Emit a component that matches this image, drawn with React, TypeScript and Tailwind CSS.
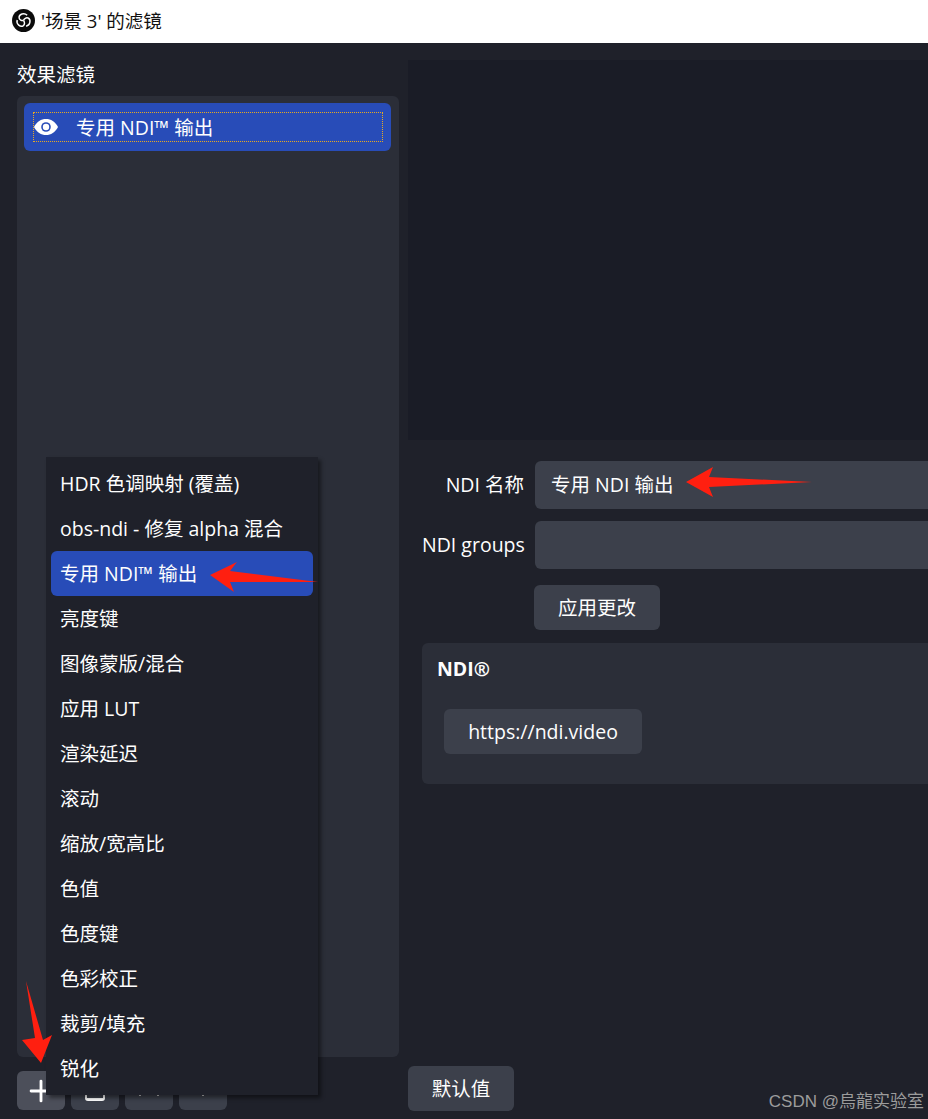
import { Plus } from "lucide-react";

const font = "font-['Open_Sans','Noto_Sans_CJK_SC',sans-serif]";

const filters = [
  "HDR 色调映射 (覆盖)",
  "obs-ndi - 修复 alpha 混合",
  "专用 NDI™ 输出",
  "亮度键",
  "图像蒙版/混合",
  "应用 LUT",
  "渲染延迟",
  "滚动",
  "缩放/宽高比",
  "色值",
  "色度键",
  "色彩校正",
  "裁剪/填充",
  "锐化",
];

function ObsLogo() {
  const blade = "M15.8 6.6C12.8 3.4 7 5.4 7.4 9.2C7.7 11.2 10 12.4 12 12";
  return (
    <svg width="23" height="23" viewBox="0 0 24 24">
      <circle cx="12" cy="12" r="12" fill="#0b0b0b" />
      <path d={blade} fill="none" stroke="#fff" strokeWidth="1.5" />
      <path d={blade} fill="none" stroke="#fff" strokeWidth="1.5" transform="rotate(120 12 12)" />
      <path d={blade} fill="none" stroke="#fff" strokeWidth="1.5" transform="rotate(240 12 12)" />
    </svg>
  );
}

function Eye() {
  return (
    <svg width="24" height="16" viewBox="0 0 24 16">
      <path d="M0 8C3 2.5 7 0 12 0S21 2.5 24 8C21 13.5 17 16 12 16S3 13.5 0 8Z" fill="#fff" />
      <circle cx="12" cy="8" r="4.8" fill="#284cb8" />
      <circle cx="12" cy="8" r="3.2" fill="#fff" />
    </svg>
  );
}

function ToolButton({ light, children }: { light?: boolean; children?: React.ReactNode }) {
  return (
    <button className={`w-[48px] h-[39px] rounded-md flex items-center justify-center text-white ${light ? "bg-[#4c4f5a]" : "bg-[#3c404b]"}`}>
      {children}
    </button>
  );
}

function Tick() {
  return <span className="block w-[2px] h-[1px] bg-[#c8c8c8]" />;
}

function Arrow({ className, w, h, points }: { className: string; w: number; h: number; points: string }) {
  return (
    <svg className={className} width={w} height={h} viewBox={`0 0 ${w} ${h}`}>
      <polygon points={points} fill="#ff1f10" />
    </svg>
  );
}

export default function App() {
  return (
    <div className={`relative w-[928px] h-[1119px] overflow-hidden flex flex-col bg-[#1f212a] text-[19.5px] text-[#fefefe] ${font}`}>
      <div className="h-[43px] shrink-0 bg-white flex items-center pl-[12px] pb-[2px] gap-[6px] text-[#111] text-[18.5px]">
        <ObsLogo />
        <span>'场景 3' 的滤镜</span>
      </div>

      <div className="flex-1 flex min-h-0">
        <div className="w-[408px] shrink-0 pl-[17px] pr-[9px] pt-[17px] pb-[9px] flex flex-col">
          <div className="h-[36px] pb-[6px] flex items-center">效果滤镜</div>
          <div className="flex-1 rounded-md bg-[#2b2e38] pl-[7px] pr-[8px] pt-[7px]">
            <div className="h-[48px] rounded-md bg-[#284cb8] pl-[9px] pr-[8px] py-[9px]">
              <div className="h-[30px] flex items-center border border-dotted border-[#e8a820]">
                <Eye />
                <span className="ml-[18px] pt-[1px]">专用 NDI™ 输出</span>
              </div>
            </div>
          </div>
          <div className="mt-[14px] flex gap-[6px]">
            <ToolButton light>
              <Plus size={34} strokeWidth={2} />
            </ToolButton>
            <ToolButton>
              <span className="flex justify-center gap-[3px] w-[20px] h-[18px] pt-[10px] border-x-[2px] border-b-[3px] border-white rounded-[3px] mt-[3px]">
                <Tick />
                <Tick />
                <Tick />
              </span>
            </ToolButton>
            <ToolButton>
              <span className="flex gap-[16px] mt-[9px]">
                <Tick />
                <Tick />
              </span>
            </ToolButton>
            <ToolButton>
              <span className="mt-[9px]">
                <Tick />
              </span>
            </ToolButton>
          </div>
        </div>

        <div className="flex-1 min-w-0 pt-[17px] pb-[8px] flex flex-col">
          <div className="h-[380px] shrink-0 bg-[#1a1c26]" />
          <div className="mt-[21px] ml-[14px] flex flex-col">
            <div className="flex items-center gap-[11px]">
              <div className="w-[102px] shrink-0 text-right whitespace-nowrap">NDI 名称</div>
              <div className="w-[500px] shrink-0 h-[48px] rounded-md bg-[#3c404b] pl-[16px] flex items-center">专用 NDI 输出</div>
            </div>
            <div className="mt-[12px] flex items-center gap-[11px]">
              <div className="w-[102px] shrink-0 text-right whitespace-nowrap">NDI groups</div>
              <div className="w-[500px] shrink-0 h-[48px] rounded-md bg-[#3c404b]" />
            </div>
            <button className="mt-[16px] ml-[112px] w-[126px] h-[45px] rounded-md bg-[#3c404b]">应用更改</button>
            <div className="mt-[13px] w-[600px] h-[141px] rounded-md bg-[#2b2e38] pl-[15px] pt-[13px]">
              <div className="font-bold leading-[26px]">NDI®</div>
              <button className="mt-[27px] ml-[7px] w-[198px] h-[45px] rounded-md bg-[#3c404b]">https://ndi.video</button>
            </div>
          </div>
          <button className="mt-auto w-[106px] h-[45px] rounded-md bg-[#3c404b]">默认值</button>
        </div>
      </div>

      <div className="absolute left-[46px] top-[457px] w-[272px] h-[638px] bg-[#1f212a] shadow-[3px_3px_4px_rgba(0,0,0,0.45)] px-[5px] pt-[4px]">
        {filters.map((f, i) => (
          <div key={f} className={`h-[45px] pl-[9px] flex items-center rounded-md ${i === 2 ? "bg-[#284cb8]" : ""}`}>
            {f}
          </div>
        ))}
      </div>

      <Arrow className="absolute left-[686px] top-[467px]" w={127} h={30} points="0,15 27,0 23,10 126,15 23,20 27,30" />
      <Arrow className="absolute left-[210px] top-[562px]" w={110} h={30} points="0,13 27,0 20,9 108,20 20,20 24,30" />
      <Arrow className="absolute left-[22px] top-[981px]" w={30} h={82} points="4,0 21,59 30,54 19,82 0,59 13,57" />

      <div className="absolute right-[4px] bottom-[6px] text-[17px] leading-[22px] text-[#9c9c9c] font-['Liberation_Sans','Noto_Sans_CJK_SC',sans-serif]">
        CSDN @烏龍实验室
      </div>
    </div>
  );
}
